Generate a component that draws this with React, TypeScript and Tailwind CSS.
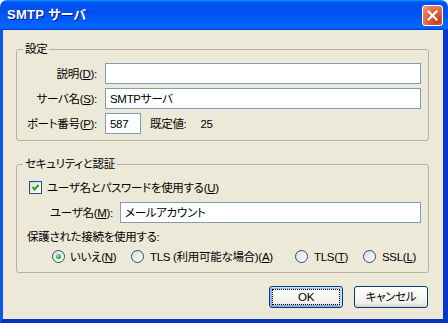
import type { ReactNode } from "react";

function Field({ value, className = "" }: { value?: string; className?: string }) {
  return (
    <div
      className={`flex h-[21px] items-center border border-[#7F9DB9] bg-white pl-[4px] ${className}`}
    >
      {value}
    </div>
  );
}

function Group({ title, children }: { title: string; children: ReactNode }) {
  return (
    <fieldset className="rounded-[3px] border border-[#B3B09F]">
      <legend className="ml-[6px] px-[2px] leading-[14px]">{title}</legend>
      {children}
    </fieldset>
  );
}

function Radio({ checked = false }: { checked?: boolean }) {
  return (
    <span className="flex h-[13px] w-[13px] shrink-0 items-center justify-center rounded-full border border-[#1C5180] bg-[linear-gradient(135deg,#DCDCD7,#FFFFFF)]">
      {checked && (
        <span className="h-[5px] w-[5px] rounded-full bg-[radial-gradient(circle_at_40%_35%,#8BF08B,#21A121_70%)]" />
      )}
    </span>
  );
}

function Button({ label, focused = false }: { label: string; focused?: boolean }) {
  return (
    <button
      className={`flex h-[22px] w-[74px] items-center justify-center rounded-[3px] border border-[#003C74] bg-[linear-gradient(180deg,#FFFFFF,#F0F0EA_80%,#D8D2C6)] ${
        focused
          ? "shadow-[inset_-1px_1px_#CEE7FF,inset_1px_2px_#98B8EA,inset_-2px_2px_#BCD4F6,inset_1px_-1px_#89ADE4,inset_2px_-2px_#89ADE4] outline-1 outline-dotted outline-black -outline-offset-4"
          : ""
      }`}
    >
      {label}
    </button>
  );
}

export default function App() {
  return (
    <div className="h-[323px] w-[448px] bg-white font-['Liberation_Sans','Noto_Sans_CJK_JP',sans-serif] text-[11.5px] leading-[14px] tracking-[-0.3px] text-black [font-feature-settings:'palt']">
      <div className="flex h-full flex-col overflow-hidden rounded-t-[7px]">
        {/* title bar */}
        <div className="flex h-[30px] shrink-0 items-center justify-between bg-[linear-gradient(180deg,#0997FF,#0053EE_8%,#0050EE_40%,#0066FF_88%,#0066FF_93%,#005BFF_95%,#003DD7_96%,#003DD7)] pl-[7px] pr-[5px]">
          <span className="text-[13px] font-bold tracking-[0.3px] text-white [text-shadow:1px_1px_#0F1089]">
            SMTP サーバ
          </span>
          <div className="mt-[1px] flex h-[21px] w-[21px] items-center justify-center rounded-[3px] border border-white bg-[radial-gradient(circle_at_75%_80%,#C33D1E,#E06A48_55%,#F29A7C)]">
            <svg width="11" height="11" viewBox="0 0 11 11">
              <path d="M1.5 1.5L9.5 9.5M9.5 1.5L1.5 9.5" stroke="white" strokeWidth="2.2" strokeLinecap="square" />
            </svg>
          </div>
        </div>

        {/* body */}
        <div className="flex flex-1 flex-col border-b-[4px] border-l-[3px] border-r-[5px] border-b-[#0A31BF] border-l-[#0B58EC] border-r-[#0838C8] bg-[#ECE9D8] pt-[12px]">
          <div className="ml-[13px] mr-[14px]">
            <Group title="設定">
              <div className="flex flex-col gap-[4px] pb-[6px] pr-[7px] pt-[7px]">
                <div className="flex items-center gap-[8px]">
                  <span className="w-[80px] text-right">
                    説明(<u>D</u>):
                  </span>
                  <Field className="flex-1" />
                </div>
                <div className="flex items-center gap-[8px]">
                  <span className="w-[80px] text-right">
                    サーバ名(<u>S</u>):
                  </span>
                  <Field className="flex-1" value="SMTPサーバ" />
                </div>
                <div className="flex items-center gap-[8px]">
                  <span className="w-[80px] text-right">
                    ポート番号(<u>P</u>):
                  </span>
                  <Field className="w-[36px]" value="587" />
                  <span className="ml-[1px]">既定値:</span>
                  <span className="ml-[6px]">25</span>
                </div>
              </div>
            </Group>
          </div>

          <div className="ml-[13px] mr-[14px] mt-[16px]">
            <Group title="セキュリティと認証">
              <div className="flex flex-col pb-[8px] pr-[7px] pt-[9px]">
                <div className="ml-[12px] flex h-[15px] items-center gap-[5px]">
                  <span className="flex h-[13px] w-[13px] items-center justify-center border border-[#1C5180] bg-[linear-gradient(135deg,#DCDCD7,#FFFFFF)]">
                    <svg width="11" height="11" viewBox="0 0 11 11">
                      <path d="M2.5 5L4.5 7.5L8.5 3" stroke="#21A121" strokeWidth="2" fill="none" />
                    </svg>
                  </span>
                  <span>
                    ユーザ名とパスワードを使用する(<u>U</u>)
                  </span>
                </div>
                <div className="ml-[33px] mt-[7px] flex items-center">
                  <span className="w-[70px]">
                    ユーザ名(<u>M</u>):
                  </span>
                  <Field className="flex-1 pl-[3px]" value="メールアカウント" />
                </div>
                <div className="ml-[10px] mt-[7px]">保護された接続を使用する:</div>
                <div className="ml-[35px] mt-[5px] flex h-[15px] items-center">
                  <div className="flex w-[79px] items-center gap-[5px]">
                    <Radio checked />
                    <span>
                      いいえ(<u>N</u>)
                    </span>
                  </div>
                  <div className="flex w-[164px] items-center gap-[6px]">
                    <Radio />
                    <span>
                      TLS (利用可能な場合)(<u>A</u>)
                    </span>
                  </div>
                  <div className="flex w-[68px] items-center gap-[6px]">
                    <Radio />
                    <span>
                      TLS(<u>T</u>)
                    </span>
                  </div>
                  <div className="flex items-center gap-[6px]">
                    <Radio />
                    <span>
                      SSL(<u>L</u>)
                    </span>
                  </div>
                </div>
              </div>
            </Group>
          </div>

          <div className="mr-[15px] mt-[13px] flex justify-end gap-[11px]">
            <Button label="OK" focused />
            <Button label="キャンセル" />
          </div>
        </div>
      </div>
    </div>
  );
}
